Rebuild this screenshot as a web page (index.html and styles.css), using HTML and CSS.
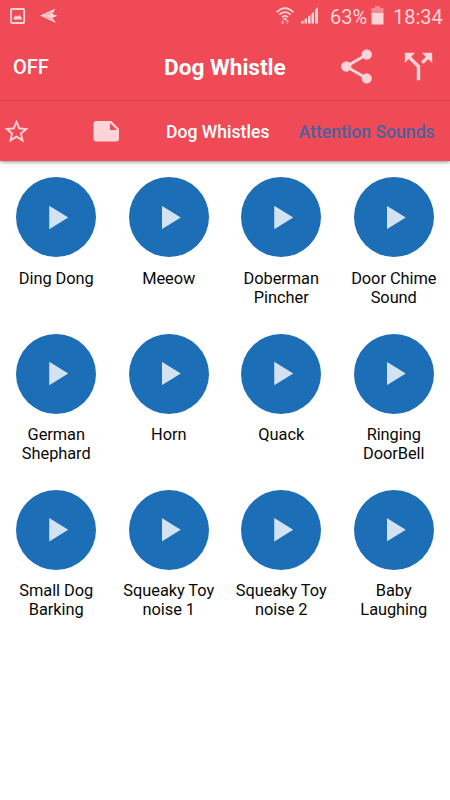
FILE: index.html
```html
<!DOCTYPE html>
<html lang="en">
<head>
<meta charset="utf-8">
<title>Dog Whistle</title>
<link rel="stylesheet" href="styles.css">
</head>
<body>
<header class="header">
  <div class="status">
    <svg class="s-image" viewBox="0 0 16 17"><rect x="1" y="1" width="13.2" height="14" rx="1" fill="none" stroke="currentColor" stroke-width="1.8"/><path d="M3.6 11.6V9.4l2.3-2 1.6 1.3 1.6-1.7 2.6 2.4v2.2z" fill="currentColor"/></svg>
    <svg class="s-plane" viewBox="0 0 18 16"><path d="M0 7.6 15.5.5 12.5 6.2 17.5 7.8 12.5 9.8 16 15z" fill="currentColor"/><path d="M5 7 13 4.5M5 8.6l8 2.6" stroke="#ef4a56" stroke-width=".5"/></svg>
    <svg class="s-wifi" viewBox="0 0 18 18"><g fill="none" stroke="currentColor" stroke-width="1.7"><path d="M.7 5.2Q9-2.8 17.3 5.2M3.3 7.7q5.7-5.2 11.4 0M5.9 10.2q3.1-2.6 6.2 0"/></g><path d="m9 13.5-2-2q2-1.5 4 0z" fill="currentColor"/><path d="M6.6 16.5v-4M5 15l1.6 2 1.6-2M11.2 17v-4M9.7 14.7l1.5-2 1.5 2" fill="none" stroke="currentColor" opacity=".6"/></svg>
    <svg class="s-signal" viewBox="0 0 18 17"><path d="M0 16.5v-2l2.6-1v3zM3.6 16.5v-4.5l2.4-1v5.5zM7 16.5V9.7l2.5-1.6v8.4zM10.5 16.5V6.8L13 4.7v11.8zM14 16.5V2.8L17 0v16.5z" fill="currentColor"/></svg>
    <span class="percent">63%</span>
    <svg class="s-battery" viewBox="0 0 13 19"><path d="M4 0h5v2h3.5v5H.5V2H4z" fill="currentColor" opacity=".45"/><path d="M.5 7h12v11.5H.5z" fill="currentColor"/></svg>
    <span class="clock">18:34</span>
  </div>
  <div class="toolbar">
    <span class="off">OFF</span>
    <h1 class="title">Dog Whistle</h1>
    <svg class="share" viewBox="0 0 24 24"><path fill="currentColor" d="M18 16.08c-.76 0-1.44.3-1.96.77L8.91 12.7c.05-.23.09-.46.09-.7s-.04-.47-.09-.7l7.05-4.11c.54.5 1.25.81 2.04.81 1.66 0 3-1.34 3-3s-1.34-3-3-3-3 1.34-3 3c0 .24.04.47.09.7L8.04 9.81C7.5 9.31 6.79 9 6 9c-1.66 0-3 1.34-3 3s1.34 3 3 3c.79 0 1.5-.31 2.04-.81l7.12 4.16c-.05.21-.08.43-.08.65 0 1.61 1.31 2.92 2.92 2.92s2.92-1.31 2.92-2.92-1.31-2.92-2.92-2.92z"/></svg>
    <svg class="split" viewBox="0 0 24 24"><path fill="currentColor" d="M14 4l2.29 2.29-2.88 2.88 1.42 1.42 2.88-2.88L20 10V4zM10 4H4v6l2.29-2.29 4.71 4.7V20h2v-8.41l-5.29-5.3z"/></svg>
  </div>
  <nav class="tabs">
    <svg class="star" viewBox="0 0 24 24"><path fill="currentColor" d="M22 9.24l-7.19-.62L12 2 9.19 8.63 2 9.24l5.46 4.73L5.82 21 12 17.27 18.18 21l-1.63-7.03L22 9.24zM12 15.4l-3.76 2.27 1-4.28-3.32-2.88 4.38-.38L12 6.1l1.71 4.04 4.38.38-3.32 2.88 1 4.28L12 15.4z"/></svg>
    <svg class="note" viewBox="0 0 24 24"><path fill="currentColor" d="M22 10l-6-6H4c-1.1 0-2 .9-2 2v12.01c0 1.1.9 1.99 2 1.99l16-.01c1.1 0 2-.89 2-1.99v-8zm-7-4.5l5.5 5.5H15V5.5z"/></svg>
    <span class="tab">Dog Whistles</span>
    <span class="tab active">Attention Sounds</span>
  </nav>
</header>
<main class="grid">
  <div class="sound"><div class="disc"><i class="play"></i></div><p>Ding Dong</p></div>
  <div class="sound"><div class="disc"><i class="play"></i></div><p>Meeow</p></div>
  <div class="sound"><div class="disc"><i class="play"></i></div><p>Doberman<br>Pincher</p></div>
  <div class="sound"><div class="disc"><i class="play"></i></div><p>Door Chime<br>Sound</p></div>
  <div class="sound"><div class="disc"><i class="play"></i></div><p>German<br>Shephard</p></div>
  <div class="sound"><div class="disc"><i class="play"></i></div><p>Horn</p></div>
  <div class="sound"><div class="disc"><i class="play"></i></div><p>Quack</p></div>
  <div class="sound"><div class="disc"><i class="play"></i></div><p>Ringing<br>DoorBell</p></div>
  <div class="sound"><div class="disc"><i class="play"></i></div><p>Small Dog<br>Barking</p></div>
  <div class="sound"><div class="disc"><i class="play"></i></div><p>Squeaky Toy<br>noise 1</p></div>
  <div class="sound"><div class="disc"><i class="play"></i></div><p>Squeaky Toy<br>noise 2</p></div>
  <div class="sound"><div class="disc"><i class="play"></i></div><p>Baby<br>Laughing</p></div>
</main>
</body>
</html>
```
FILE: styles.css
```css
* { box-sizing: border-box; }
body { margin: 0; height: 800px; overflow: hidden; background: #fff; font-family: Roboto, "Liberation Sans", sans-serif; color: #080808; }
svg { display: block; flex: none; }
.header { height: 161px; background: #ef4a56; color: #ffd4d8; box-shadow: 0 1px 4px rgba(0, 0, 0, .45); }
.status { display: flex; height: 34px; }
.s-image { width: 16px; height: 17px; margin: 7.5px 0 0 10px; }
.s-plane { width: 18px; height: 16px; margin: 8px 0 0 14px; }
.s-wifi { width: 18px; height: 18px; margin: 7px 0 0 218px; }
.s-signal { width: 18px; height: 17px; margin: 7px 0 0 7px; }
.percent, .clock { flex: none; font-size: 20px; line-height: 34px; font-weight: 400; white-space: nowrap; }
.percent { width: 38px; margin-left: 11px; }
.s-battery { width: 13px; height: 19px; margin: 6px 0 0 3px; }
.clock { margin-left: 9px; }
.toolbar { display: flex; height: 67px; border-bottom: 1px solid #dc414d; }
.off { width: 151px; padding-left: 13px; color: #fff; font-size: 20px; font-weight: 500; line-height: 67px; }
.title { width: 185px; margin: 0; padding-left: 13px; color: #fff; font-size: 22.6px; font-weight: 700; line-height: 67px; white-space: nowrap; }
.share { width: 41px; height: 41px; margin-top: 11.5px; }
.split { width: 41px; height: 41px; margin: 12px 0 0 21px; }
.tabs { display: flex; height: 60px; }
.star { width: 29px; height: 29px; margin: 16px 0 0 2px; }
.note { width: 30.5px; height: 30.5px; margin: 15px 0 0 60px; }
.tab { flex: none; width: 132.5px; margin-left: 44.5px; color: #fff; font-size: 17.6px; font-weight: 500; line-height: 63px; white-space: nowrap; }
.active { margin-left: 0; color: #48629f; }
.grid { display: grid; grid-template-columns: repeat(4, 112.5px); grid-auto-rows: 156.2px; padding-top: 16.4px; }
.sound { display: flex; flex-direction: column; align-items: center; }
.disc { display: flex; align-items: center; width: 80px; height: 80px; padding-left: 33px; border-radius: 50%; background: #1c6eb7; }
.play { width: 19px; height: 23.5px; background: #d2e2f1; clip-path: polygon(0 0, 100% 50%, 0 100%); }
.sound p { margin: 11.5px 0 0; font-size: 16.4px; letter-spacing: -.06px; line-height: 19px; text-align: center; white-space: nowrap; }
```
